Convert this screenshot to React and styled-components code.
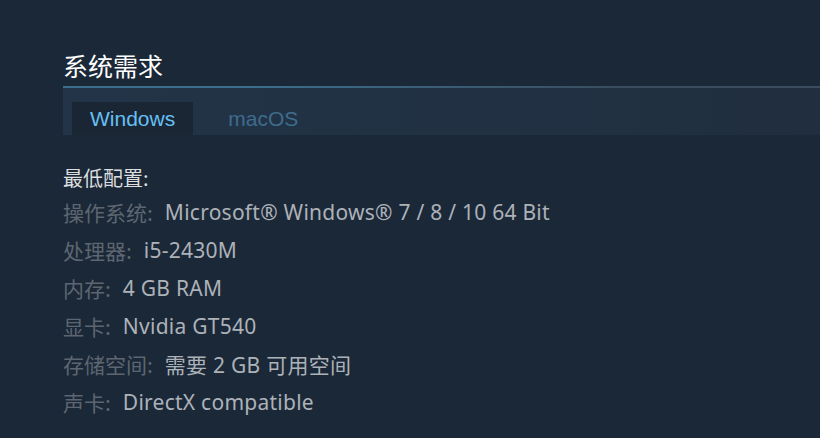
import styled, { createGlobalStyle } from "styled-components";

const GlobalStyle = createGlobalStyle`
  html, body {
    margin: 0;
    padding: 0;
    background: #1b2838;
  }
  body {
    font-family: "Noto Sans", "Noto Sans CJK SC", sans-serif;
  }
`;

const requisitos = [
  { label: "操作系统:", value: "Microsoft® Windows® 7 / 8 / 10 64 Bit" },
  { label: "处理器:", value: "i5-2430M" },
  { label: "内存:", value: "4 GB RAM" },
  { label: "显卡:", value: "Nvidia GT540" },
  { label: "存储空间:", value: "需要 2 GB 可用空间" },
  { label: "声卡:", value: "DirectX compatible" },
];

export default function App() {
  return (
    <>
      <GlobalStyle />
      <Page>
        <Title>系统需求</Title>
        <TabBar>
          <Tab $active>Windows</Tab>
          <Tab>macOS</Tab>
        </TabBar>
        <Specs>
          <SpecsTitle>最低配置:</SpecsTitle>
          {requisitos.map((item) => (
            <SpecRow key={item.label}>
              <SpecLabel>{item.label}</SpecLabel>
              <SpecValue>{item.value}</SpecValue>
            </SpecRow>
          ))}
        </Specs>
      </Page>
    </>
  );
}

const Page = styled.main`
  width: 820px;
  height: 438px;
  box-sizing: border-box;
  padding: 47px 0 0 63px;
  overflow: hidden;
`;

const Title = styled.h2`
  margin: 0 0 3px;
  font-family: "Noto Sans CJK SC", sans-serif;
  font-size: 25px;
  font-weight: 400;
  line-height: 36px;
  color: #ffffff;
`;

const TabBar = styled.div`
  display: flex;
  gap: 17px;
  height: 49px;
  padding: 14px 0 0 9px;
  box-sizing: border-box;
  border-top: 2px solid;
  border-image: linear-gradient(90deg, #3b6e8c 0%, #3b6e8c 25%, #3a4c5e 75%) 1;
  background: linear-gradient(90deg, #233448 0%, #202e3f 100%);
`;

const Tab = styled.div`
  padding: 0 18px;
  font-family: "Liberation Sans", Arial, sans-serif;
  font-size: 21px;
  line-height: 33px;
  color: ${({ $active }) => ($active ? "#66c0f4" : "#3d6c8d")};
  background: ${({ $active }) => ($active ? "#1b2634" : "transparent")};
`;

const Specs = styled.div`
  padding-top: 28px;
`;

const SpecsTitle = styled.div`
  font-family: "Noto Sans CJK SC", sans-serif;
  font-size: 20px;
  line-height: 30px;
  color: #dcdedf;
`;

const SpecRow = styled.div`
  display: flex;
  gap: 12px;
  height: 38px;
  align-items: center;
  font-size: 21px;
`;

const SpecLabel = styled.span`
  font-family: "Noto Sans CJK SC", sans-serif;
  color: #5d6670;
`;

const SpecValue = styled.span`
  color: #acb2b8;
  letter-spacing: 0.25px;
`;
